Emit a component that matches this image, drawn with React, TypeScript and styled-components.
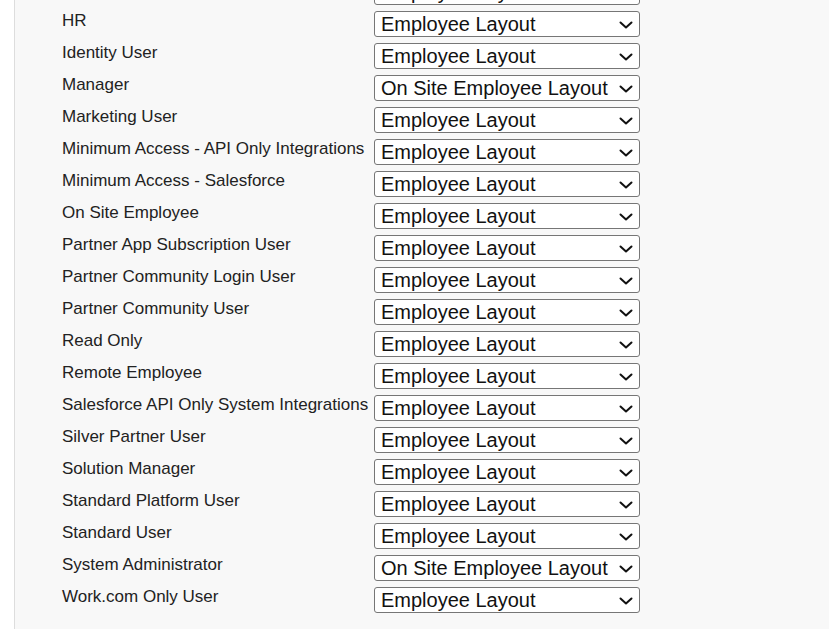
import React from "react";
import styled, { createGlobalStyle } from "styled-components";

const GlobalStyle = createGlobalStyle`
  html, body {
    margin: 0;
    padding: 0;
    background: #ffffff;
    overflow: hidden;
  }
  body {
    font-family: "Liberation Sans", Arial, sans-serif;
  }
`;

const Page = styled.div`
  display: flex;
  height: 629px;
  padding-left: 14px;
  background: #ffffff;
`;

const Panel = styled.div`
  flex: 1;
  background: #f8f8f8;
  border-left: 1px solid #dddddd;
  padding-left: 47px;
  overflow: hidden;
`;

const List = styled.div`
  display: grid;
  grid-template-columns: 312px 266px;
  row-gap: 6px;
  margin-top: -21px;
`;

const Label = styled.div`
  font-size: 17px;
  color: #222222;
  line-height: 19px;
  white-space: nowrap;
`;

const SelectWrap = styled.div`
  position: relative;
  width: 266px;
  height: 26px;
`;

const Select = styled.select`
  appearance: none;
  -webkit-appearance: none;
  display: block;
  width: 266px;
  height: 26px;
  font-family: "Liberation Sans", Arial, sans-serif;
  font-size: 20px;
  line-height: 24px;
  color: #111111;
  background: #ffffff;
  border: 1px solid #767676;
  border-radius: 3px;
  padding: 0 28px 0 6px;
  margin: 0;
  outline: none;
`;

const Chevron = styled.svg`
  position: absolute;
  right: 7px;
  top: 10px;
  width: 14px;
  height: 8px;
  pointer-events: none;
`;

const EMP = "Employee Layout";
const ONSITE = "On Site Employee Layout";

const rows: [string, string][] = [
  ["", EMP],
  ["HR", EMP],
  ["Identity User", EMP],
  ["Manager", ONSITE],
  ["Marketing User", EMP],
  ["Minimum Access - API Only Integrations", EMP],
  ["Minimum Access - Salesforce", EMP],
  ["On Site Employee", EMP],
  ["Partner App Subscription User", EMP],
  ["Partner Community Login User", EMP],
  ["Partner Community User", EMP],
  ["Read Only", EMP],
  ["Remote Employee", EMP],
  ["Salesforce API Only System Integrations", EMP],
  ["Silver Partner User", EMP],
  ["Solution Manager", EMP],
  ["Standard Platform User", EMP],
  ["Standard User", EMP],
  ["System Administrator", ONSITE],
  ["Work.com Only User", EMP],
];

export default function App() {
  return (
    <>
      <GlobalStyle />
      <Page>
        <Panel>
          <List>
            {rows.map(([name, layout], i) => (
              <React.Fragment key={i}>
                <Label>{name}</Label>
                <SelectWrap>
                  <Select defaultValue={layout} aria-label={name || "Profile"}>
                    <option value={EMP}>{EMP}</option>
                    <option value={ONSITE}>{ONSITE}</option>
                  </Select>
                  <Chevron viewBox="0 0 14 8" aria-hidden="true">
                    <path
                      d="M1.5 1.5 L7 6.5 L12.5 1.5"
                      fill="none"
                      stroke="#111111"
                      strokeWidth="2"
                      strokeLinecap="round"
                      strokeLinejoin="round"
                    />
                  </Chevron>
                </SelectWrap>
              </React.Fragment>
            ))}
          </List>
        </Panel>
      </Page>
    </>
  );
}
